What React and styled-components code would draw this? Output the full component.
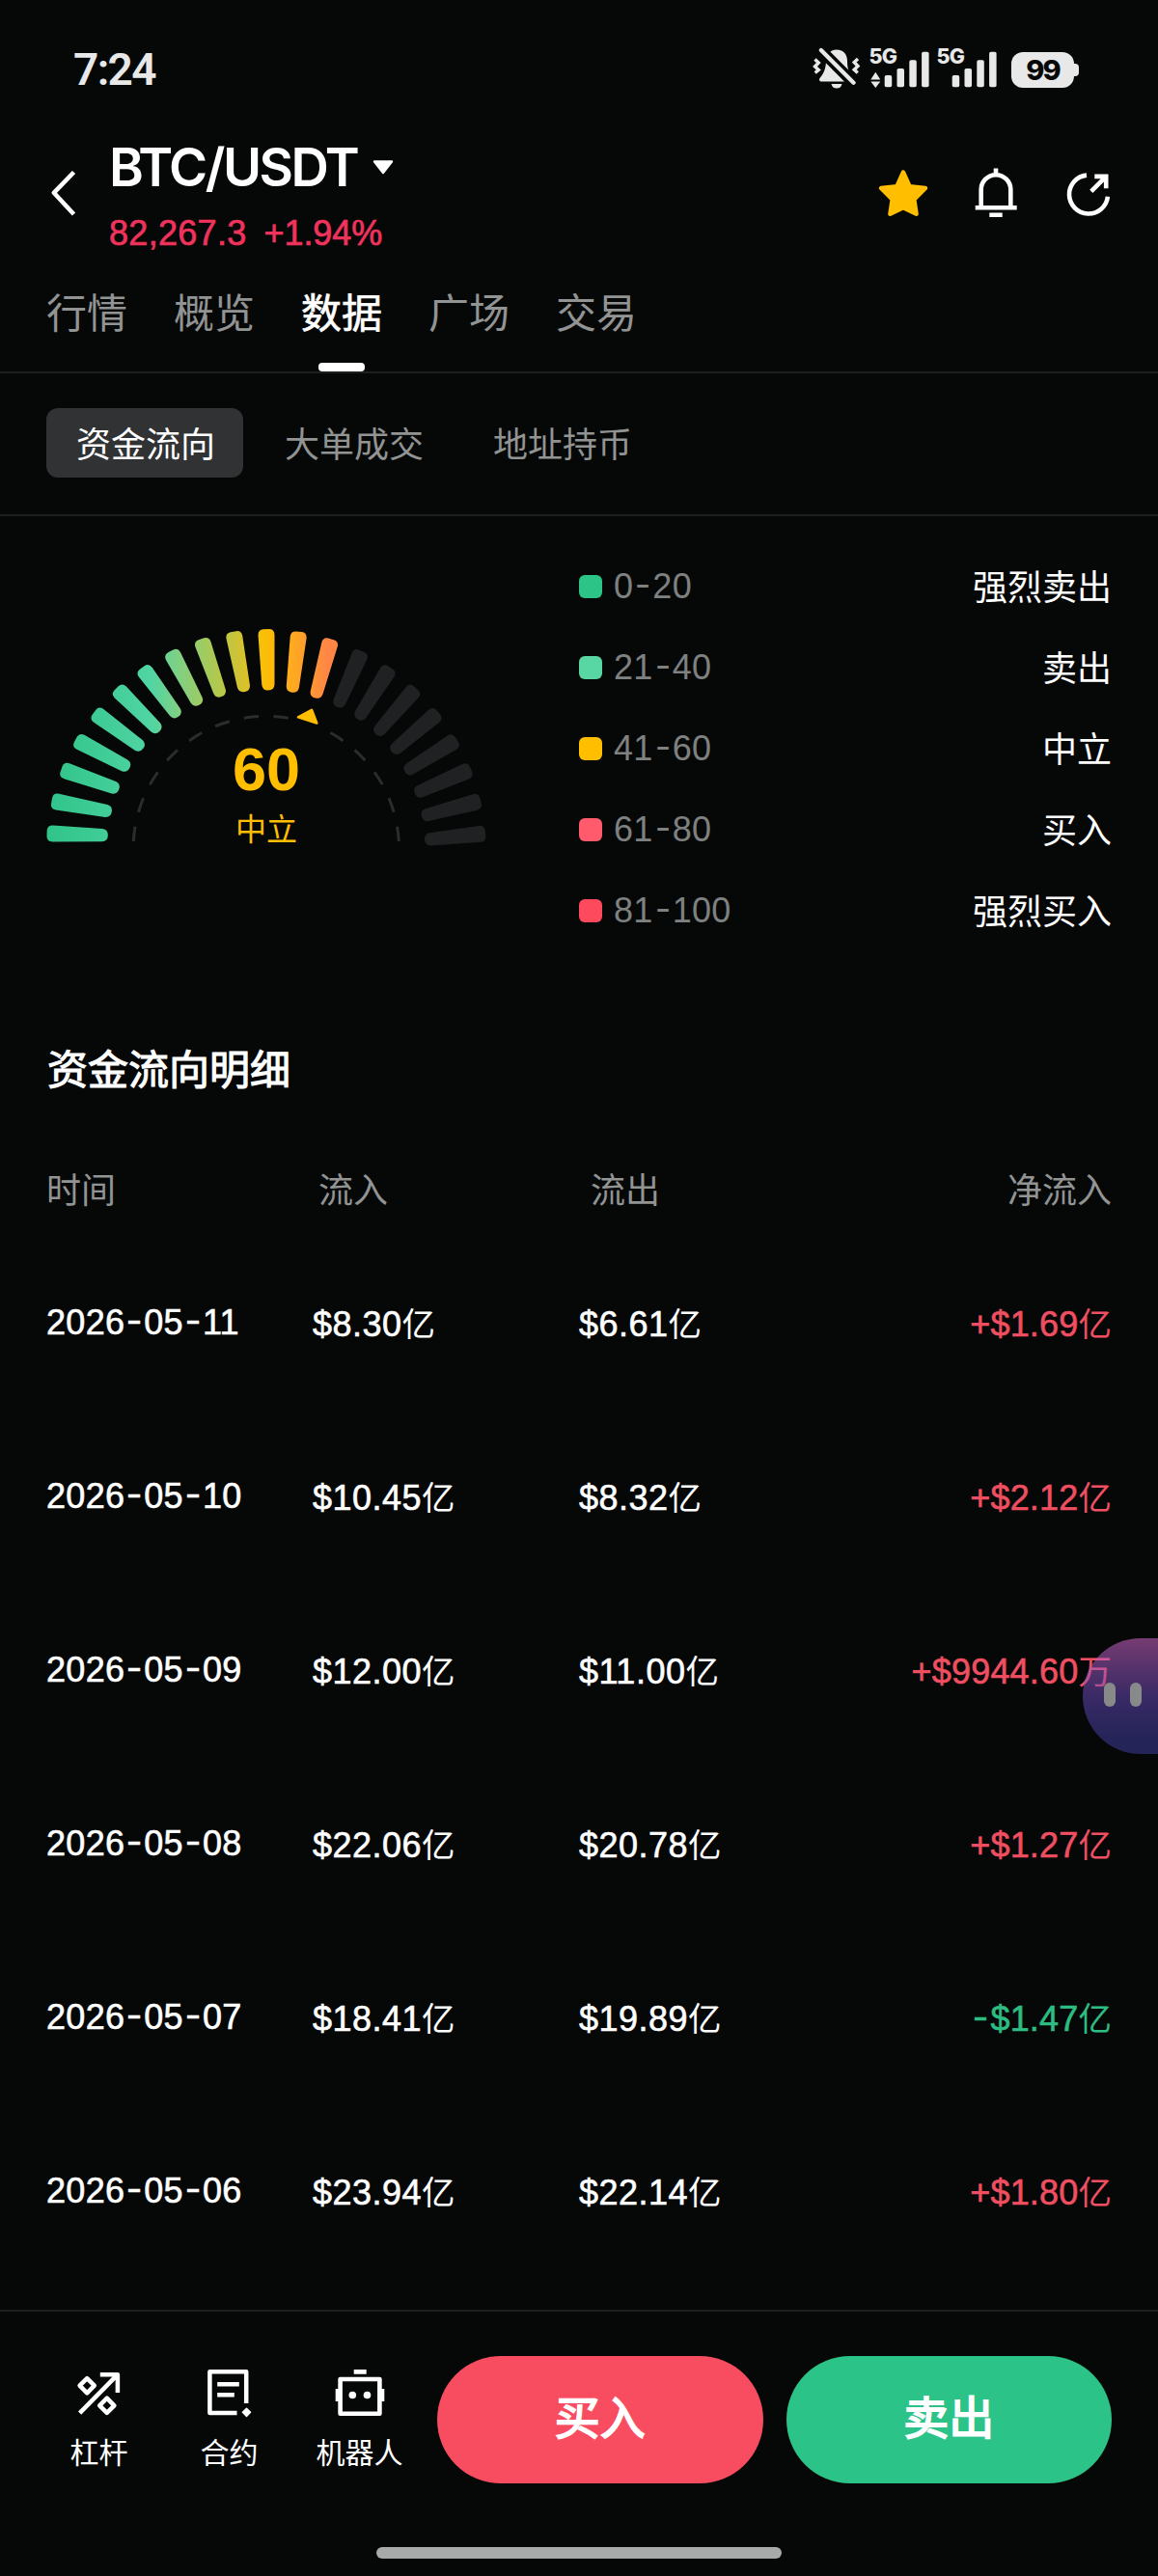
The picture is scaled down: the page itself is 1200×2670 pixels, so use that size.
import React from "react";
import styled, { createGlobalStyle } from "styled-components";

const c = {
  bg: "#060808",
  line: "#1d1f1f",
  text: "#ffffff",
  muted: "#929494",
  dim: "#7f8080",
  up: "#ef4f60",
  down: "#2dbd83",
  price: "#f0335c",
  gold: "#ffbf00",
};
const numeric = `"Liberation Sans", Arial, "Noto Sans CJK SC", sans-serif`;

const GlobalStyle = createGlobalStyle`
  * { box-sizing: border-box; }
  body {
    margin: 0;
    background: ${c.bg};
    color: ${c.text};
    font-family: Inter, "Noto Sans CJK SC", sans-serif;
    -webkit-font-smoothing: antialiased;
  }
`;

const Screen = styled.div`
  position: relative;
  display: flex;
  flex-direction: column;
  width: 1200px;
  height: 2670px;
  overflow: hidden;
`;

/* ---------- status bar ---------- */
const StatusBar = styled.div`
  display: flex;
  justify-content: space-between;
  height: 145px;
  padding: 49px 82px 0 76px;
  color: #e7e8e7;
`;
const Clock = styled.div`
  font-family: Roboto, sans-serif;
  font-weight: 600;
  font-size: 46px;
  line-height: 47px;
  letter-spacing: -1.6px;
`;
const StatusIcons = styled.div`
  display: flex;
  height: 46px;
`;
const SignalSvg = styled.svg`
  margin: -8px 0 0 ${(p) => p.$gap}px;
  font-family: Inter, sans-serif;
  font-weight: 800;
`;
const Battery = styled.div`
  display: flex;
  align-items: center;
  height: 37px;
  margin: 5px 0 0 15px;
`;
const BatteryBody = styled.div`
  width: 65px;
  height: 37px;
  border-radius: 12px;
  background: #e7e8e7;
  color: ${c.bg};
  font-weight: 800;
  font-size: 29px;
  line-height: 37px;
  letter-spacing: -2px;
  text-align: center;
`;
const BatteryTip = styled.div`
  width: 5px;
  height: 13px;
  border-radius: 0 4px 4px 0;
  background: #e7e8e7;
`;

/* ---------- header ---------- */
const Header = styled.header`
  display: flex;
  align-items: center;
  height: 111px;
  padding: 0 45px 0 48px;
`;
const Pair = styled.div`
  flex: 1;
  margin-left: 29px;
`;
const PairTitle = styled.div`
  display: flex;
  align-items: center;
  gap: 15px;
  font-weight: 600;
  font-size: 54.5px;
  line-height: 57px;
  letter-spacing: -2.5px;
`;
const PairPrice = styled.div`
  display: flex;
  gap: 18px;
  margin-top: 25px;
  color: ${c.price};
  font-family: ${numeric};
  font-size: 36px;
  line-height: 30px;
  letter-spacing: 0.3px;
  -webkit-text-stroke: 0.7px currentColor;
`;
const Change = styled.span`
  letter-spacing: -0.1px;
`;
const HeaderActions = styled.div`
  display: flex;
  gap: 42px;
`;

/* ---------- tabs ---------- */
const Tabs = styled.nav`
  display: flex;
  gap: 48px;
  height: 131px;
  padding: 0 48px;
  border-bottom: 2px solid ${c.line};
`;
const Tab = styled.div`
  position: relative;
  padding-top: 39px;
  color: ${(p) => (p.$active ? c.text : c.muted)};
  font-size: 42px;
  line-height: 60px;
  -webkit-text-stroke: ${(p) => (p.$active ? "0.7px currentColor" : "0")};
  &::after {
    content: "";
    display: ${(p) => (p.$active ? "block" : "none")};
    position: absolute;
    left: calc(50% - 24px);
    bottom: 0;
    width: 48px;
    height: 9px;
    border-radius: 4px;
    background: #fff;
  }
`;
const SubTabs = styled.nav`
  display: flex;
  gap: 12px;
  padding: 36px 48px 38px;
  border-bottom: 2px solid ${c.line};
`;
const SubTab = styled.div`
  padding: 0 29px 0 31px;
  border-radius: 12px;
  background: ${(p) => (p.$active ? "#313234" : "transparent")};
  color: ${(p) => (p.$active ? c.text : c.muted)};
  font-size: 36px;
  line-height: 77px;
  height: 72px;
`;

/* ---------- sentiment ---------- */
const Sentiment = styled.section`
  display: flex;
  justify-content: space-between;
  padding: 31px 48px 0;
`;
const GaugeBox = styled.div`
  position: relative;
  width: 460px;
  height: 240px;
  margin-top: 86px;
`;
const GaugeReadout = styled.div`
  position: absolute;
  left: 0;
  top: 113px;
  width: 456px;
  text-align: center;
  color: ${c.gold};
`;
const GaugeValue = styled.div`
  font-family: ${numeric};
  font-weight: 700;
  font-size: 63px;
  line-height: 64px;
`;
const GaugeLabel = styled.div`
  margin-top: 11px;
  font-size: 32px;
  line-height: 40px;
`;
const Legend = styled.div`
  width: 552px;
`;
const LegendRow = styled.div`
  display: flex;
  align-items: center;
  height: 84px;
`;
const Swatch = styled.i`
  width: 24px;
  height: 24px;
  border-radius: 6px;
  background: ${(p) => p.$color};
`;
const LegendRange = styled.span`
  flex: 1;
  height: 84px;
  margin-left: 12px;
  color: ${c.dim};
  font-family: ${numeric};
  font-size: 36px;
  line-height: 84px;
  letter-spacing: 0.3px;
`;
const LegendName = styled.span`
  height: 84px;
  font-size: 36px;
  line-height: 87px;
`;
const Dash = styled.span`
  position: relative;
  top: -3px;
  display: inline-block;
  width: 20px;
  letter-spacing: 0;
  text-align: center;
  transform: scaleX(1.3);
`;

/* ---------- table ---------- */
const SectionTitle = styled.h2`
  margin: 93px 49px 0;
  font-weight: 400;
  font-size: 42px;
  line-height: 60px;
  -webkit-text-stroke: 1.1px currentColor;
`;
const HeadRow = styled.div`
  display: grid;
  grid-template-columns: repeat(4, 1fr);
  gap: 24px;
  margin: 65px 48px 17px;
  color: ${c.muted};
  font-size: 36px;
  line-height: 60px;
`;
const Row = styled.div`
  display: grid;
  grid-template-columns: repeat(4, 1fr);
  height: 180px;
  padding: 0 48px;
  font-family: ${numeric};
  font-size: 36px;
  line-height: 180px;
`;
const HeadCell = styled.div`
  text-align: ${(p) => (p.$end ? "right" : "left")};
`;
const DateCell = styled.div`
  line-height: 179px;
  letter-spacing: 0.3px;
  -webkit-text-stroke: 0.6px currentColor;
`;
const Amount = styled.div`
  padding-top: 2px;
  letter-spacing: 0.5px;
  white-space: nowrap;
  -webkit-text-stroke: 0.6px currentColor;
`;
const Net = styled(Amount)`
  letter-spacing: 0.2px;
  text-align: right;
  color: ${(p) => (p.$down ? c.down : c.up)};
`;
const Unit = styled.span`
  font-size: 34.5px;
  letter-spacing: 0;
  -webkit-text-stroke: 0;
`;

/* ---------- floating assistant ---------- */
const Assistant = styled.div`
  position: absolute;
  right: 0;
  top: 1698px;
  display: flex;
  gap: 15px;
  width: 78px;
  height: 120px;
  padding: 46px 0 0 22px;
  border-radius: 60px 0 0 60px;
  background: linear-gradient(#dc6cd4, #6a4abb 50%, #423ea4 85%);
  opacity: 0.52;
`;
const Eye = styled.i`
  width: 12px;
  height: 25px;
  border-radius: 6px;
  background: #fff;
`;

/* ---------- bottom bar ---------- */
const BottomBar = styled.footer`
  position: relative;
  display: flex;
  align-items: flex-start;
  height: 276px;
  margin-top: auto;
  padding: 46px 48px 0 35px;
  border-top: 2px solid ${c.line};
`;
const Tool = styled.div`
  display: flex;
  flex-direction: column;
  align-items: center;
  gap: 15px;
  width: 135px;
  padding-top: 11px;
  font-size: 30px;
  line-height: 41px;
`;
const Trade = styled.div`
  flex: 1;
  height: 132px;
  margin-left: ${(p) => (p.$buy ? 13 : 24)}px;
  border-radius: 66px;
  background: ${(p) => (p.$buy ? "#f84d60" : "#2bc387")};
  font-weight: 400;
  font-size: 47px;
  line-height: 128px;
  text-align: center;
  -webkit-text-stroke: 1.8px currentColor;
`;
const HomeIndicator = styled.div`
  position: absolute;
  left: 390px;
  bottom: 18px;
  width: 420px;
  height: 12px;
  border-radius: 6px;
  background: #a8aaa9;
`;

/* ---------- drawings ---------- */
function MuteIcon() {
  return (
    <svg width="50" height="46" viewBox="0 0 50 46" fill="#e7e8e7">
      <path d="M25 2.5C17.5 2.5 14 8.500 14 14C14 24 10 29 7.200 32.500Q6.500 35.500 9 35.500H41Q43.500 35.500 42 32.500C38 28 36 23 36 14C36 8 32.500 2.500 25 2.500Z" />
      <path d="M19.500 38H30.500Q29.500 42.500 25 42.500Q20.500 42.500 19.500 38Z" />
      <path d="M8.700 3L43 37.500" stroke={c.bg} strokeWidth="11.500" />
      <path d="M8.900 3L42.500 36.700" stroke="#e7e8e7" strokeWidth="4.300" strokeLinecap="round" />
      <path
        d="M2.500 12.500L6.300 16L2.500 20L6.300 23.500L2.700 26.500M47 12L43.200 15.500L47 19.500L43.200 23.200L46.800 26.500"
        fill="none"
        stroke="#e7e8e7"
        strokeWidth="3.400"
      />
    </svg>
  );
}

function Signal({ arrows, gap, offset }) {
  const tops = [29, 22, 13.3, 4.7];
  return (
    <SignalSvg $gap={gap} width="62" height="54" viewBox="0 -8 62 54" fill="#e7e8e7">
      <text x="-0.500" y="17" fontSize="21.500" letterSpacing="-0.700">5G</text>
      {arrows && <path d="M1.300 33.500L6.300 25.700L11.300 33.500ZM1.300 35.500H11.300L6.300 42Z" />}
      {tops.map((t, i) => (
        <rect key={t} x={offset + i * 12.8} y={t} width="7.500" height={41.3 - t} rx="1.800" />
      ))}
    </SignalSvg>
  );
}

const BackIcon = () => (
  <svg width="36" height="54" viewBox="0 0 36 54" fill="none" stroke="#fff" strokeWidth="4.600">
    <path d="M28.500 4.500L7.800 25.800L28.500 48" strokeLinejoin="round" />
  </svg>
);
const CaretIcon = () => (
  <svg width="24" height="16" viewBox="0 0 24 16">
    <path d="M3 2.500H21L12 14Z" fill="#fff" stroke="#fff" strokeWidth="2.400" strokeLinejoin="round" />
  </svg>
);
const StarIcon = () => (
  <svg width="54" height="54" viewBox="0 0 54 54">
    <path
      d="M27 4.500L33.700 19.300L50 21L38.300 32.600L40.600 47.800L27 41.200L13.400 47.800L15.700 32.600L4 21L20.300 19.300Z"
      fill={c.gold}
      stroke={c.gold}
      strokeWidth="4.400"
      strokeLinejoin="round"
    />
  </svg>
);
const BellIcon = () => (
  <svg width="54" height="54" viewBox="0 0 54 54" fill="none" stroke="#fff" strokeWidth="4.600">
    <path d="M27 0.500V7M11.700 41V22.500A15.300 15.300 0 0 1 42.300 22.500V41M5.700 41.200H48.700M20.300 48.700H33.700" />
  </svg>
);
const ShareIcon = () => (
  <svg width="54" height="54" viewBox="0 0 54 54" fill="none" stroke="#fff" strokeWidth="4.600">
    <path d="M25 7.600A20 20 0 1 0 46.900 29.700M29.800 24.300L44.700 9.400M33.300 8.900H45.200V21.200" />
  </svg>
);
const LeverageIcon = () => (
  <svg width="54" height="54" viewBox="0 0 54 54" fill="none" stroke="#fff" strokeWidth="4.500" strokeLinejoin="round">
    <path d="M27.800 8.300H45.900V27M6.600 48.200L45 9.200" />
    <path d="M14.200 12.100L21.800 19.700L14.200 27.300L6.600 19.700ZM34.800 32.700L42.400 40.300L34.800 47.900L27.200 40.300Z" />
  </svg>
);
const ContractIcon = () => (
  <svg width="54" height="54" viewBox="0 0 54 54" fill="none" stroke="#fff" strokeWidth="4.500" strokeLinejoin="round">
    <path d="M44.200 38V5.300H6.400V48H34.500M14.200 18.200H36.800M14.200 29.300H31.800" />
    <path d="M44.500 43.200L48.600 47.300L44.500 51.400L40.400 47.300Z" fill="#fff" strokeWidth="1.400" />
  </svg>
);
const RobotIcon = () => (
  <svg width="54" height="54" viewBox="0 0 54 54" fill="none" stroke="#fff" strokeWidth="4.600" strokeLinejoin="round">
    <path d="M6.600 13H47.400V48.700H6.600ZM20.700 5.400H33.700" />
    <path d="M1.700 23H5V36H1.700ZM49 23H52.300V36H49Z" fill="#fff" stroke="none" />
    <circle cx="19.300" cy="29.500" r="3.800" fill="#fff" stroke="none" />
    <circle cx="34.500" cy="29.500" r="3.800" fill="#fff" stroke="none" />
  </svg>
);

const GAUGE = { cx: 227.8, cy: 228, outer: 227.8, inner: 137.7, ticks: 21, lit: 13 };
// One tapered tick: wide rounded end at the origin, narrow end 63px inward.
const BAR =
  "M0 -3Q0.200 -8.400 6 -8.500L57.500 -6.600Q63.300 -6 63.300 0Q63.300 6 57.500 6.600L6 8.500Q0.200 8.400 0 3Z";

function Gauge() {
  const { cx, cy, outer, inner, ticks, lit } = GAUGE;
  const bars = Array.from({ length: ticks }, (_, i) => 4.1 + i * 8.59);
  const rad = (d) => (d * Math.PI) / 180;
  const at = (d) => `${cx - inner * Math.cos(rad(d))} ${cy - inner * Math.sin(rad(d))}`;
  const place = (d) => `translate(${cx} ${cy}) rotate(${d}) translate(${-outer} 0) rotate(-2.100)`;
  const dashes = Array.from({ length: 14 }, (_, i) => 90 + (i - 6.5) * 12.85).filter((_, i) => i !== 8);
  return (
    <svg width="460" height="240" viewBox="0 0 460 240">
      <defs>
        <linearGradient id="heat" gradientUnits="userSpaceOnUse" x1="0" y1="0" x2="310" y2="0">
          <stop offset="0" stopColor="#30c48a" />
          <stop offset="0.150" stopColor="#3cca93" />
          <stop offset="0.350" stopColor="#50d5a3" />
          <stop offset="0.440" stopColor="#7fd084" />
          <stop offset="0.550" stopColor="#a8ca57" />
          <stop offset="0.650" stopColor="#d2c332" />
          <stop offset="0.730" stopColor="#fbbf05" />
          <stop offset="0.830" stopColor="#ffa822" />
          <stop offset="0.940" stopColor="#ff8645" />
        </linearGradient>
        <clipPath id="lit">
          {bars.slice(0, lit).map((d) => (
            <path key={d} d={BAR} transform={place(d)} />
          ))}
        </clipPath>
      </defs>
      <rect width="320" height="240" fill="url(#heat)" clipPath="url(#lit)" />
      {bars.slice(lit).map((d) => (
        <path key={d} d={BAR} fill="#202123" transform={place(d)} />
      ))}
      {dashes.map((d) => (
        <path
          key={d}
          d={`M${at(d - 3.2)}A${inner} ${inner} 0 0 1 ${at(d + 3.2)}`}
          fill="none"
          stroke="#2b2c2d"
          strokeWidth="3"
        />
      ))}
      <path d="M261 91.300L275 83.800L280.300 97.500Z" fill={c.gold} stroke={c.gold} strokeWidth="2.500" strokeLinejoin="round" />
    </svg>
  );
}

/* ---------- data ---------- */
const TABS = ["行情", "概览", "数据", "广场", "交易"];
const SUBTABS = ["资金流向", "大单成交", "地址持币"];
const LEGEND = [
  ["#2dc487", "0-20", "强烈卖出"],
  ["#58d6a4", "21-40", "卖出"],
  ["#ffbf00", "41-60", "中立"],
  ["#ff5b6d", "61-80", "买入"],
  ["#fe4a5d", "81-100", "强烈买入"],
];
const FLOWS = [
  ["2026-05-11", "$8.30", "$6.61", "+$1.69", "亿"],
  ["2026-05-10", "$10.45", "$8.32", "+$2.12", "亿"],
  ["2026-05-09", "$12.00", "$11.00", "+$9944.60", "万"],
  ["2026-05-08", "$22.06", "$20.78", "+$1.27", "亿"],
  ["2026-05-07", "$18.41", "$19.89", "-$1.47", "亿"],
  ["2026-05-06", "$23.94", "$22.14", "+$1.80", "亿"],
];

// Numbers joined by a wide dash raised to the middle of the digits.
function Dashed({ value }) {
  return value.split("-").map((part, i) => (
    <React.Fragment key={i}>
      {i > 0 && <Dash>-</Dash>}
      {part}
    </React.Fragment>
  ));
}

export default function App() {
  return (
    <Screen>
      <GlobalStyle />
      <StatusBar>
        <Clock>7:24</Clock>
        <StatusIcons>
          <MuteIcon />
          <Signal arrows gap={9} offset={15.7} />
          <Signal gap={8} offset={15.7} />
          <Battery>
            <BatteryBody>99</BatteryBody>
            <BatteryTip />
          </Battery>
        </StatusIcons>
      </StatusBar>

      <Header>
        <BackIcon />
        <Pair>
          <PairTitle>
            BTC/USDT
            <CaretIcon />
          </PairTitle>
          <PairPrice>
            <span>82,267.3</span>
            <Change>+1.94%</Change>
          </PairPrice>
        </Pair>
        <HeaderActions>
          <StarIcon />
          <BellIcon />
          <ShareIcon />
        </HeaderActions>
      </Header>

      <Tabs>
        {TABS.map((t) => (
          <Tab key={t} $active={t === "数据"}>{t}</Tab>
        ))}
      </Tabs>
      <SubTabs>
        {SUBTABS.map((t, i) => (
          <SubTab key={t} $active={i === 0}>{t}</SubTab>
        ))}
      </SubTabs>

      <Sentiment>
        <GaugeBox>
          <Gauge />
          <GaugeReadout>
            <GaugeValue>60</GaugeValue>
            <GaugeLabel>中立</GaugeLabel>
          </GaugeReadout>
        </GaugeBox>
        <Legend>
          {LEGEND.map(([color, range, name]) => (
            <LegendRow key={range}>
              <Swatch $color={color} />
              <LegendRange><Dashed value={range} /></LegendRange>
              <LegendName>{name}</LegendName>
            </LegendRow>
          ))}
        </Legend>
      </Sentiment>

      <SectionTitle>资金流向明细</SectionTitle>
      <HeadRow>
        <HeadCell>时间</HeadCell>
        <HeadCell>流入</HeadCell>
        <HeadCell>流出</HeadCell>
        <HeadCell $end>净流入</HeadCell>
      </HeadRow>
      {FLOWS.map(([date, inflow, outflow, net, unit]) => (
        <Row key={date}>
          <DateCell><Dashed value={date} /></DateCell>
          <Amount>{inflow}<Unit>亿</Unit></Amount>
          <Amount>{outflow}<Unit>亿</Unit></Amount>
          <Net $down={net.startsWith("-")}><Dashed value={net} /><Unit>{unit}</Unit></Net>
        </Row>
      ))}

      <Assistant>
        <Eye />
        <Eye />
      </Assistant>

      <BottomBar>
        <Tool><LeverageIcon />杠杆</Tool>
        <Tool><ContractIcon />合约</Tool>
        <Tool><RobotIcon />机器人</Tool>
        <Trade $buy>买入</Trade>
        <Trade>卖出</Trade>
        <HomeIndicator />
      </BottomBar>
    </Screen>
  );
}
